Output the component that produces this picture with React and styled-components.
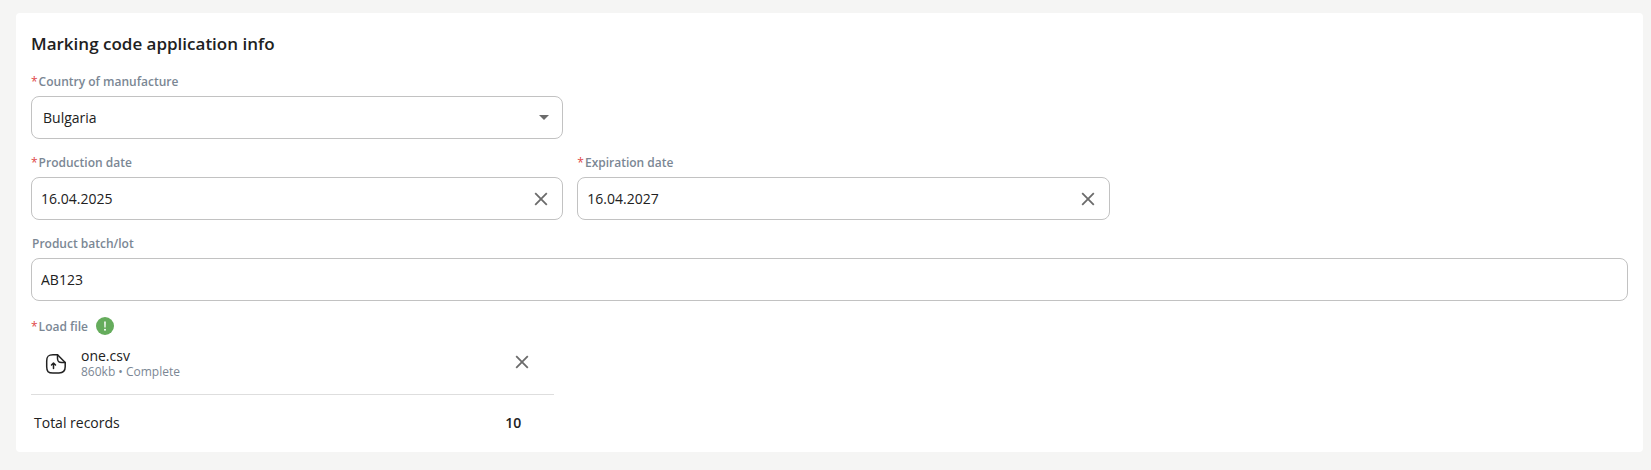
import React, { useState } from "react";
import styled, { createGlobalStyle } from "styled-components";

const COLORS = {
  BACKGROUND: "#f5f5f4",
  TEXT: "#212121",
  LABEL: "#7b8794",
  BORDER: "#c2c2c2",
  DIVIDER: "#dedede",
  ICON: "#6b6b6b",
  RED: "#e04848",
  GREEN: "#65ac5c"
};

const GlobalStyle = createGlobalStyle`
  * {
    box-sizing: border-box;
  }

  body {
    margin: 0;
    background-color: ${COLORS.BACKGROUND};
    color: ${COLORS.TEXT};
    font-family: "Segoe UI", "Open Sans", sans-serif;
    font-size: 14px;
  }

  input,
  select,
  button {
    font: inherit;
    color: inherit;
  }
`;

const Page = styled.main`
  padding: 13px 8px 18px 16px;
`;

const Card = styled.form`
  border-radius: 4px;
  background-color: white;
  padding: 18px 15px 19px;
`;

const Title = styled.h1`
  margin: 0 0 15px;
  font-size: 17px;
  line-height: 26px;
  font-weight: 600;
`;

const FieldRow = styled.div`
  display: grid;
  grid-template-columns: ${props =>
    props.$full ? "100%" : "repeat(2, calc(100% / 3))"};
  column-gap: 14px;
  margin-bottom: 14px;
`;

const Label = styled.label`
  display: flex;
  gap: 1px;
  height: 20px;
  margin-bottom: 4px;
  padding-left: ${props => (props.$required ? "0" : "1px")};
  color: ${COLORS.LABEL};
  font-size: 12px;
  line-height: 20px;
  font-weight: 600;
`;

const Star = styled.span`
  color: ${COLORS.RED};
  font-weight: 400;
`;

const Control = styled.div`
  display: flex;
  align-items: center;
  height: 43px;
  padding-right: 13px;
  border: 1px solid ${COLORS.BORDER};
  border-radius: 8px;
  color: ${COLORS.ICON};
`;

const Input = styled.input`
  flex: 1;
  min-width: 0;
  height: 100%;
  padding: 0 9px;
  border: 0;
  outline: 0;
  background: none;
  color: ${COLORS.TEXT};
`;

const Select = styled.select`
  flex: 1;
  height: 100%;
  padding: 0 11px;
  border: 0;
  outline: 0;
  background: none;
  color: ${COLORS.TEXT};
  appearance: none;
`;

const IconButton = styled.button`
  display: flex;
  padding: 1px;
  border: 0;
  background: none;
  color: ${COLORS.ICON};
  cursor: pointer;
`;

const UploadBlock = styled.section`
  width: calc(100% / 3 - 9px);
`;

const UploadHead = styled.div`
  display: flex;
  align-items: flex-end;
  gap: 8px;
  margin-top: 16px;

  label {
    margin-bottom: 0;
  }
`;

const HiddenFile = styled.input`
  display: none;
`;

const Badge = styled.span`
  display: flex;
  padding-bottom: 2px;
  color: ${COLORS.GREEN};
`;

const FileRow = styled.div`
  display: flex;
  align-items: center;
  padding: 11px 24px 14px 14px;
  border-bottom: 1px solid ${COLORS.DIVIDER};

  button {
    padding-bottom: 5px;
  }
`;

const FileInfo = styled.div`
  flex: 1;
  padding-left: 14px;
`;

const FileName = styled.div`
  line-height: 16px;
`;

const FileMeta = styled.div`
  color: ${COLORS.LABEL};
  font-size: 12px;
  line-height: 16px;
`;

const Totals = styled.div`
  display: flex;
  align-items: center;
  justify-content: space-between;
  padding: 18px 33px 0 3px;
  line-height: 20px;
`;

const Count = styled.strong`
  font-weight: 600;
`;

const CrossIcon = () => (
  <svg width="14" height="14" viewBox="0 0 14 14" aria-hidden="true">
    <path
      d="M1.2 1.2 12.8 12.8M12.8 1.2 1.2 12.8"
      fill="none"
      stroke="currentColor"
      strokeWidth="1.8"
    />
  </svg>
);

const ArrowIcon = () => (
  <svg width="10" height="5" viewBox="0 0 10 5" aria-hidden="true">
    <path d="M0 0h10L5 5z" fill="currentColor" />
  </svg>
);

const FileIcon = () => (
  <svg
    width="22"
    height="22"
    viewBox="0 0 22 22"
    fill="none"
    stroke={COLORS.TEXT}
    strokeWidth="1.5"
    strokeLinecap="round"
    strokeLinejoin="round"
    aria-hidden="true"
  >
    <path d="M20.2 9.5v4.3c0 4.6-1.8 6.2-6.2 6.2H8c-4.8 0-6.3-1.5-6.3-6.2V8c0-4.7 1.5-6.3 6.3-6.3h4.5z" />
    <path d="M12.5 1.7v3.6c0 3.2 1 4.2 4.2 4.2h3.5" />
    <path d="M8.5 15.5v-5.2M6.5 12l2-2 2 2" />
  </svg>
);

const AlertIcon = () => (
  <svg width="18" height="18" viewBox="0 0 18 18" aria-hidden="true">
    <circle cx="9" cy="9" r="9" fill="currentColor" />
    <path d="M8.2 4.5h1.6l-.2 6H8.4z" fill="white" />
    <circle cx="9" cy="12.8" r="1" fill="white" />
  </svg>
);

const FieldLabel = ({ id, required, children }) => (
  <Label htmlFor={id} $required={required}>
    {required && <Star>*</Star>}
    {children}
  </Label>
);

const DateField = ({ id, label, initial }) => {
  const [value, setValue] = useState(initial);
  return (
    <div>
      <FieldLabel id={id} required>
        {label}
      </FieldLabel>
      <Control>
        <Input id={id} value={value} onChange={e => setValue(e.target.value)} />
        <IconButton
          type="button"
          aria-label={`Clear ${label}`}
          onClick={() => setValue("")}
        >
          <CrossIcon />
        </IconButton>
      </Control>
    </div>
  );
};

const App = () => {
  return (
    <Page>
      <GlobalStyle />
      <Card>
        <Title>Marking code application info</Title>

        <FieldRow>
          <div>
            <FieldLabel id="country" required>
              Country of manufacture
            </FieldLabel>
            <Control>
              <Select id="country" defaultValue="Bulgaria">
                <option>Bulgaria</option>
              </Select>
              <ArrowIcon />
            </Control>
          </div>
        </FieldRow>

        <FieldRow>
          <DateField
            id="production"
            label="Production date"
            initial="16.04.2025"
          />
          <DateField
            id="expiration"
            label="Expiration date"
            initial="16.04.2027"
          />
        </FieldRow>

        <FieldRow $full>
          <div>
            <FieldLabel id="batch">Product batch/lot</FieldLabel>
            <Control>
              <Input id="batch" defaultValue="AB123" />
            </Control>
          </div>
        </FieldRow>

        <UploadBlock>
          <UploadHead>
            <FieldLabel id="file" required>
              Load file
            </FieldLabel>
            <HiddenFile id="file" type="file" />
            <Badge>
              <AlertIcon />
            </Badge>
          </UploadHead>
          <FileRow>
            <FileIcon />
            <FileInfo>
              <FileName>one.csv</FileName>
              <FileMeta>860kb • Complete</FileMeta>
            </FileInfo>
            <IconButton type="button" aria-label="Remove one.csv">
              <CrossIcon />
            </IconButton>
          </FileRow>
          <Totals>
            <span>Total records</span>
            <Count>10</Count>
          </Totals>
        </UploadBlock>
      </Card>
    </Page>
  );
};

export default App;
